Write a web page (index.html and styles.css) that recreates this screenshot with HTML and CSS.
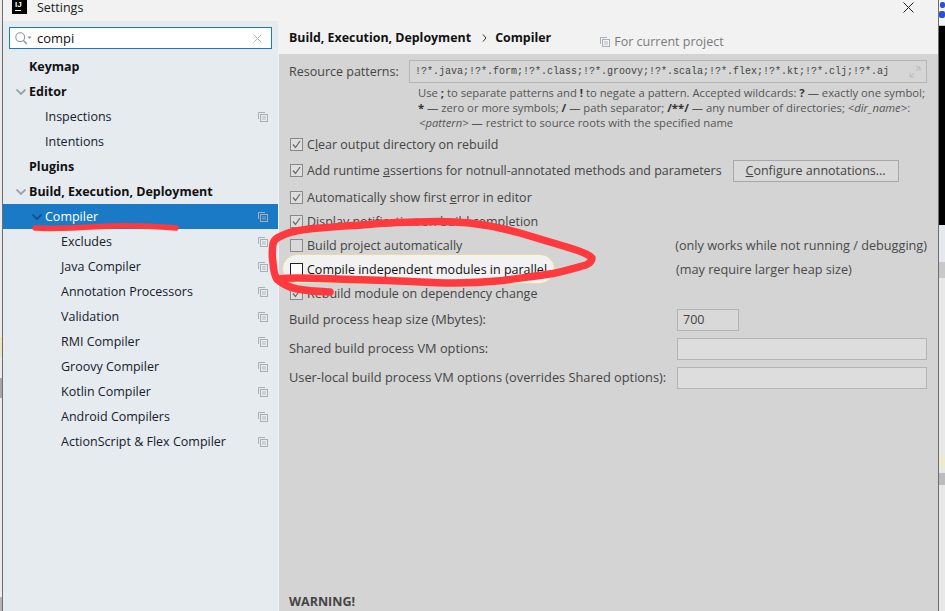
FILE: index.html
```html
<!DOCTYPE html>
<html lang="en">
<head>
<meta charset="utf-8">
<title>Settings</title>
<link rel="stylesheet" href="styles.css">
</head>
<body>
<div class="desktop">
  <div class="strip-left">
    <div class="sl-a"></div><div class="sl-yellow"></div><div class="sl-b"></div><div class="sl-gray"></div><div class="sl-c"></div><div class="sl-end"></div>
  </div>
  <div class="window">
    <header class="titlebar">
      <span class="logo"><span class="logo-text">IJ</span><span class="logo-bar"></span></span>
      <span class="title">Settings</span>
      <svg class="close" viewBox="0 0 11 11"><path d="M.5.5l10 10M10.5.5l-10 10" stroke="#222" fill="none"/></svg>
    </header>
    <div class="body">
      <aside class="sidebar">
        <div class="search">
          <svg class="search-icon" viewBox="0 0 17 13"><circle cx="5.2" cy="5.2" r="4.4" fill="none" stroke="#8e9499" stroke-width="1.1"/><path d="M8.4 8.4l3.4 3.6" stroke="#8e9499" stroke-width="1.4"/><path d="M12.5 4.5h4l-2 2.4z" fill="#8e9499"/></svg>
          <span class="search-text">compi</span>
          <svg class="search-clear" viewBox="0 0 9 9"><path d="M.5.5l8 8M8.5.5l-8 8" stroke="#b4b8bb" fill="none"/></svg>
        </div>
        <nav class="tree">
          <div class="row top"><span>Keymap</span></div>
          <div class="row top"><svg class="arrow" viewBox="0 0 10 6"><path d="M.5.5L5 5 9.5.5" fill="none" stroke="#9ba1a6" stroke-width="1.8"/></svg><span>Editor</span></div>
          <div class="row l1"><span>Inspections</span><svg class="copy"><use href="#copy"/></svg></div>
          <div class="row l1"><span>Intentions</span></div>
          <div class="row top"><span>Plugins</span></div>
          <div class="row top"><svg class="arrow" viewBox="0 0 10 6"><path d="M.5.5L5 5 9.5.5" fill="none" stroke="#9ba1a6" stroke-width="1.8"/></svg><span>Build, Execution, Deployment</span></div>
          <div class="row l1 selected"><svg class="arrow" viewBox="0 0 10 6"><path d="M.5.5L5 5 9.5.5" fill="none" stroke="#12508a" stroke-width="1.8"/></svg><span>Compiler</span><svg class="copy"><use href="#copy"/></svg></div>
          <div class="row l2"><span>Excludes</span><svg class="copy"><use href="#copy"/></svg></div>
          <div class="row l2"><span>Java Compiler</span><svg class="copy"><use href="#copy"/></svg></div>
          <div class="row l2"><span>Annotation Processors</span><svg class="copy"><use href="#copy"/></svg></div>
          <div class="row l2"><span>Validation</span><svg class="copy"><use href="#copy"/></svg></div>
          <div class="row l2"><span>RMI Compiler</span><svg class="copy"><use href="#copy"/></svg></div>
          <div class="row l2"><span>Groovy Compiler</span><svg class="copy"><use href="#copy"/></svg></div>
          <div class="row l2"><span>Kotlin Compiler</span><svg class="copy"><use href="#copy"/></svg></div>
          <div class="row l2"><span>Android Compilers</span><svg class="copy"><use href="#copy"/></svg></div>
          <div class="row l2"><span>ActionScript &amp; Flex Compiler</span><svg class="copy"><use href="#copy"/></svg></div>
        </nav>
      </aside>
      <main class="main">
        <div class="crumbs">
          <b>Build, Execution, Deployment</b>
          <svg class="crumb-sep" viewBox="0 0 5 8"><path d="M1 .5L4 4 1 7.5" fill="none" stroke="#333"/></svg>
          <b>Compiler</b>
          <span class="scope"><svg class="copy small"><use href="#copy"/></svg>For current project</span>
        </div>
        <div class="content">
          <div class="resource">
            <label class="res-label">Resource patterns:</label>
            <div class="res-field"><span class="mono">!?*.java;!?*.form;!?*.class;!?*.groovy;!?*.scala;!?*.flex;!?*.kt;!?*.clj;!?*.aj</span>
              <svg class="expand" viewBox="0 0 12 12"><path d="M7 1h4v4M11 1L7 5M5 11H1V7M1 11l4-4" fill="none" stroke="#b9b9b9"/></svg></div>
          </div>
          <p class="hint">Use <b>;</b> to separate patterns and <b>!</b> to negate a pattern. Accepted wildcards: <b>?</b> — exactly one symbol;<br><b>*</b> — zero or more symbols; <b>/</b> — path separator; <b>/**/</b> — any number of directories; <i>&lt;dir_name&gt;</i>:<br><i class="pat">&lt;pattern&gt;</i> — restrict to source roots with the specified name</p>
          <div class="opt first"><svg class="cb"><use href="#chk"/></svg><span>C<u>l</u>ear output directory on rebuild</span></div>
          <div class="opt tall"><svg class="cb"><use href="#chk"/></svg><span class="tight">Add runtime <u>a</u>ssertions for notnull-annotated methods and parameters</span><span class="btn"><u>C</u>onfigure annotations...</span></div>
          <div class="opt"><svg class="cb"><use href="#chk"/></svg><span>Automatically show first <u>e</u>rror in editor</span></div>
          <div class="opt"><svg class="cb"><use href="#chk"/></svg><span>Display notification on build completion</span></div>
          <div class="opt"><svg class="cb"><use href="#box"/></svg><span class="grow">Build project automatically</span><span class="note">(only works while not running / debugging)</span></div>
          <div class="opt">
            <div class="hilite"><span class="hilite-box"></span><span>Compile independent modules in parallel</span></div>
            <span class="note after-hilite">(may require larger heap size)</span>
          </div>
          <div class="opt"><svg class="cb"><use href="#chk"/></svg><span>Rebuild module on dependency change</span></div>
          <div class="form">
            <label>Build process heap size (Mbytes):</label><div class="input short">700</div>
            <label>Shared build process VM options:</label><div class="input"></div>
            <label>User-local build process VM options (overrides Shared options):</label><div class="input"></div>
          </div>
          <div class="warning">WARNING!</div>
        </div>
      </main>
    </div>
  </div>
  <div class="strip-right">
    <div class="sr-top"><span class="glyph"></span><span class="glyph low"></span></div>
    <div class="sr-black"></div>
    <div class="sr-icons"></div>
    <div class="sr-bar"></div>
    <div class="sr-plain"></div>
    <div class="sr-yellow"></div>
    <div class="sr-mid"></div>
    <div class="sr-gray"></div>
    <div class="sr-rest"></div>
  </div>

  <svg class="ink" viewBox="0 0 945 611">
    <g fill="none" stroke="#fe3a3e" stroke-linecap="round" stroke-linejoin="round">
      <path stroke-width="5.500" d="M35 228C50 229 75 228 100 226.500S150 226 176 228"/>
      <path stroke-width="7.500" d="M417 222C395 222 375 224 353 225.500S330 227 313 228.500C300 230 293 231 287 233.500C278 237 274 239 273 244C272 250 272 256 273 263C273.500 270 274 275 277 279C282 284 288 287 297 289C308 291 318 292 330 292"/>
      <path stroke-width="7.500" d="M417 222C435 221 452 221 470 223C487 225 503 228 520 233C537 238 553 243 570 248C580 251 589 254 592 258C592 261 590 263 586 265C575 268 565 271 553 273.500C537 276 520 278 503 280.500C487 282 470 283 453 283C431 283 409 281 387 280.500C365 280 342 279 320 278.500C305 278 292 277 277 279"/>
    </g>
  </svg>
</div>
<svg class="defs" aria-hidden="true">
  <defs>
    <g id="copy" fill="none" stroke="#a9afb4"><path d="M.5 7V.5H7"/><rect x="2.500" y="2.500" width="7" height="7"/><path d="M4 5h4M4 7h4" stroke-width=".8"/></g>
    <g id="chk"><rect x=".5" y=".5" width="12" height="12" fill="#dedede" stroke="#888"/><path d="M3 6.500l2.500 3L10 3" fill="none" stroke="#6b6b6b" stroke-width="1.3"/></g>
    <g id="box"><rect x=".5" y=".5" width="12" height="12" fill="#d9d9d9" stroke="#8a8a8a"/></g>
  </defs>
</svg>
</body>
</html>
```

FILE: styles.css
```css
* { box-sizing: border-box; }
html, body { margin: 0; padding: 0; }
body { width: 945px; height: 611px; overflow: hidden; font-family: "Open Sans", "Noto Sans", sans-serif; font-size: 12.5px; color: #1c1c1c; background: #d4d4d4; }
.desktop { position: relative; display: flex; width: 945px; height: 611px; overflow: hidden; }

.strip-left { width: 3px; flex: none; display: flex; flex-direction: column; background: #ececec; border-right: 1px solid #6e6e6e; }
.sl-a { height: 337px; }
.sl-yellow { height: 20px; background: #e9e5c5; }
.sl-b { height: 21px; }
.sl-gray { height: 20px; background: #a8a8a8; }
.sl-c { flex: 1; }
.sl-end { height: 14px; background: #b5b5b5; }

.window { width: 935px; flex: none; display: flex; flex-direction: column; background: #f2f2f2; }
.titlebar { height: 21px; flex: none; display: flex; align-items: flex-start; position: relative; padding-left: 9px; }
.logo { width: 15px; height: 14px; background: #000; position: relative; display: block; flex: none; }
.logo-text { position: absolute; left: 3px; top: 1px; color: #fff; font-size: 8px; font-weight: 700; font-family: "Liberation Sans", sans-serif; line-height: 8px; }
.logo-bar { position: absolute; left: 3px; top: 10px; width: 6px; height: 1px; background: #fff; }
.title { margin-left: 10px; line-height: 15px; font-size: 12.5px; color: #222; }
.close { position: absolute; right: 24px; top: 2px; width: 11px; height: 11px; }

.body { flex: 1; display: flex; min-height: 0; }
.sidebar { width: 275px; flex: none; background: #e6ebf0; }
.search { height: 22px; margin: 6px 6px 0; width: 263px; background: #fff; border: 1px solid #1a7ac6; display: flex; align-items: center; padding: 0 9px 0 5px; }
.search-icon { width: 17px; height: 13px; flex: none; }
.search-text { flex: 1; margin-left: 5px; font-size: 13px; color: #111; }
.search-clear { width: 9px; height: 9px; flex: none; }
.tree { margin-top: 5px; }
.row { height: 25px; display: flex; align-items: center; position: relative; font-size: 12.5px; color: #15202b; }
.row .arrow { position: absolute; top: 10px; width: 10px; height: 6px; }
.row > span { display: block; }
.top { padding-left: 26px; font-weight: 700; color: #111; }
.top .arrow { left: 13px; }
.l1 { padding-left: 42px; }
.l1 .arrow { left: 29px; }
.l2 { padding-left: 58px; }
.selected { background: #1a7ac6; color: #fff; }
.copy { position: absolute; right: 10px; top: 8px; width: 10px; height: 10px; }
.copy.small { position: static; margin-right: 4px; vertical-align: -1px; }

.main { flex: 1; min-width: 0; display: flex; flex-direction: column; border-left: 1px solid #f2f2f2; }
.crumbs { height: 33px; flex: none; display: flex; align-items: center; padding-left: 10px; font-size: 12.4px; color: #111; }
.crumb-sep { width: 5px; height: 8px; margin: 0 8px 0 11px; }
.scope { margin-left: 49px; color: #7b7b7b; margin-top: 7px; font-size: 12.5px; }

.content { flex: 1; min-height: 0; background: #d4d4d4; padding: 6px 11px 0 10px; display: flex; flex-direction: column; color: #444; }
.resource { display: flex; align-items: center; height: 23px; flex: none; }
.res-label { width: 120px; flex: none; }
.res-field { width: 518px; height: 23px; border: 1px solid #b5b5b5; background: #d6d6d6; display: flex; align-items: center; padding: 0 5px; justify-content: space-between; }
.mono { font-family: "Liberation Mono", monospace; font-size: 10px; white-space: nowrap; color: #444; }
.expand { width: 12px; height: 12px; flex: none; }
.hint { margin: 2px 0 0 129px; font-size: 11.25px; line-height: 15px; color: #555; white-space: nowrap; height: 46px; flex: none; }
.hint b { color: #333; }
.pat { margin-left: 1px; }

.opt { height: 24px; flex: none; display: flex; align-items: center; white-space: nowrap; }
.opt.first { margin-top: 1px; }
.opt.tall { height: 29px; }
.cb { width: 13px; height: 13px; flex: none; margin: 0 4px 0 1px; }
.tight { font-size: 12.44px; }
.grow { width: 369.500px; }
.note { color: #4a4a4a; font-size: 12.7px; }
.btn { margin-left: 11px; width: 166px; height: 22px; border: 1px solid #a8a8a8; background: #d9d9d9; text-align: center; line-height: 20px; }

.hilite { margin-left: -7px; width: 273px; height: 30px; flex: none; border-radius: 15px; background: #f2f2f2; border: 1px solid #edd998; display: flex; align-items: center; padding-left: 7px; color: #111; white-space: nowrap; overflow: hidden; }
.hilite-box { width: 13px; height: 13px; background: #fff; border: 1px solid #222; margin-right: 4px; flex: none; }
.after-hilite { margin-left: 121px; }

.form { display: grid; grid-template-columns: 388px 250px; align-items: center; row-gap: 7px; margin-top: 4px; white-space: nowrap; }
.form label { font-size: 12.8px; padding-bottom: 2px; }
.input { height: 22px; background: #dddddd; border: 1px solid #b4b4b4; padding-left: 5px; line-height: 20px; }
.input.short { width: 62px; background: #d9d9d9; }
.warning { margin-top: auto; font-weight: 700; color: #444; height: 18px; }

.strip-right { width: 7px; flex: none; display: flex; flex-direction: column; background: #e8e8e8; border-left: 1px solid #6e6e6e; }
.sr-top { height: 26px; background: #f4f4f4; border-bottom: 1px solid #c4c4c4; padding-top: 2px; }
.glyph { display: block; width: 5px; height: 6px; background: #2a4fd0; margin: 0 0 3px 1px; border-radius: 2px; }
.glyph.low { width: 6px; height: 7px; margin-left: 0; }
.sr-black { height: 199px; background: #000; }
.sr-icons { height: 37px; background: #e5e9ee; }
.sr-bar { height: 16px; background: #c8c8c8; }
.sr-plain { height: 177px; background: #e8e8e8; }
.sr-yellow { height: 13px; background: #ecebd2; }
.sr-mid { height: 5px; background: #e8e8e8; }
.sr-gray { height: 12px; background: #bdbdbd; }
.sr-rest { flex: 1; background: #e8e8e8; }

.ink { position: absolute; left: 0; top: 0; width: 945px; height: 611px; pointer-events: none; }
.defs { position: absolute; width: 0; height: 0; }
```
